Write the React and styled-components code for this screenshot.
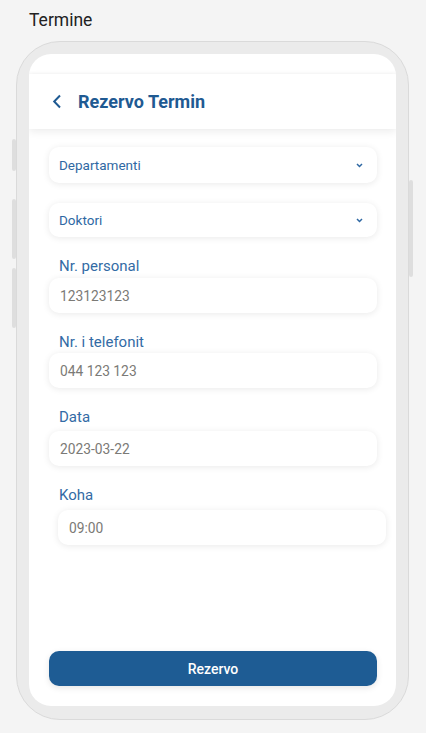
import styled, { createGlobalStyle } from 'styled-components';

const GlobalStyle = createGlobalStyle`
  html, body {
    margin: 0;
    padding: 0;
    background: #f4f4f4;
    font-family: 'Roboto', 'Liberation Sans', sans-serif;
  }
`;

const fields = [
  { label: 'Nr. personal', value: '123123123', gap: 3 },
  { label: 'Nr. i telefonit', value: '044 123 123', gap: 2 },
  { label: 'Data', value: '2023-03-22', gap: 5 },
  { label: 'Koha', value: '09:00', gap: 6, shift: 9 },
];

const Chevron = () => (
  <svg width="7" height="5" viewBox="0 0 7 5">
    <path d="M1 1l2.5 2.5L6 1" fill="none" stroke="#2f68a3" strokeWidth="1.5" />
  </svg>
);

const BackIcon = () => (
  <svg width="10" height="15" viewBox="0 0 10 15">
    <path d="M8 1.5L2.2 7.5 8 13.5" fill="none" stroke="#1f5a92" strokeWidth="2" />
  </svg>
);

const App = () => {
  return (
    <Page>
      <GlobalStyle />
      <PageTitle>Termine</PageTitle>
      <Phone>
        <SideButton $side="left" $top={97} $h={32} />
        <SideButton $side="left" $top={157} $h={60} />
        <SideButton $side="left" $top={226} $h={60} />
        <SideButton $side="right" $top={138} $h={97} />
        <Screen>
          <StatusBar />
          <Header>
            <BackIcon />
            <HeaderTitle>Rezervo Termin</HeaderTitle>
          </Header>
          <Form>
            <Select $h={36}>
              <span>Departamenti</span>
              <Chevron />
            </Select>
            <Select $h={34}>
              <span>Doktori</span>
              <Chevron />
            </Select>
            {fields.map((f) => (
              <Field key={f.label}>
                <Label $gap={f.gap}>{f.label}</Label>
                <Input $shift={f.shift || 0}>{f.value}</Input>
              </Field>
            ))}
          </Form>
          <Footer>
            <Button>Rezervo</Button>
          </Footer>
        </Screen>
      </Phone>
    </Page>
  );
};

const Page = styled.div`
  height: 733px;
  box-sizing: border-box;
  padding: 10px 0 0 16px;
`;

const PageTitle = styled.div`
  margin-left: 13px;
  font-size: 17.5px;
  line-height: 20px;
  color: #222;
`;

const Phone = styled.div`
  position: relative;
  margin-top: 11px;
  width: 393px;
  height: 679px;
  box-sizing: border-box;
  padding: 12px 12px 13px 12px;
  background: #ebebeb;
  border: 1.5px solid #dadada;
  border-radius: 44px;
  display: flex;
`;

const SideButton = styled.div`
  position: absolute;
  top: ${(p) => p.$top}px;
  ${(p) => (p.$side === 'left' ? 'left: -5px;' : 'right: -5px;')}
  width: 4px;
  height: ${(p) => p.$h}px;
  background: #dedede;
  border-radius: 2px;
`;

const Screen = styled.div`
  flex: 1;
  background: #fff;
  border-radius: 22px;
  overflow: hidden;
  display: flex;
  flex-direction: column;
`;

const StatusBar = styled.div`
  height: 20px;
  flex-shrink: 0;
`;

const Header = styled.div`
  height: 55px;
  flex-shrink: 0;
  display: flex;
  align-items: center;
  gap: 16px;
  padding-left: 23px;
  box-shadow: 0 3px 8px rgba(0, 0, 0, 0.07), 0 -1px 3px rgba(0, 0, 0, 0.04);
  position: relative;
  z-index: 1;
`;

const HeaderTitle = styled.div`
  font-size: 18px;
  font-weight: 700;
  color: #1f5a92;
`;

const Form = styled.div`
  display: flex;
  flex-direction: column;
  padding: 18px 19px 0 20px;
`;

const Select = styled.div`
  height: ${(p) => p.$h}px;
  margin-bottom: 20px;
  display: flex;
  align-items: center;
  justify-content: space-between;
  padding: 0 14px 0 10px;
  background: #fff;
  border-radius: 10px;
  box-shadow: 0 1px 7px rgba(0, 0, 0, 0.09);
  font-size: 13.5px;
  color: #2f68a3;
  svg {
    margin-top: 1px;
  }
`;

const Field = styled.div`
  display: flex;
  flex-direction: column;
  margin-bottom: 20px;
`;

const Label = styled.div`
  padding-left: 10px;
  font-size: 15px;
  line-height: 18px;
  color: #336ba5;
  margin-bottom: ${(p) => p.$gap}px;
`;

const Input = styled.div`
  height: 35px;
  display: flex;
  align-items: center;
  padding-left: 11px;
  margin-left: ${(p) => p.$shift}px;
  margin-right: ${(p) => -p.$shift}px;
  background: #fff;
  border-radius: 10px;
  box-shadow: 0 1px 7px rgba(0, 0, 0, 0.09);
  font-size: 13.8px;
  color: #7b7a76;
`;

const Footer = styled.div`
  margin-top: auto;
  padding: 0 19px 20px 20px;
`;

const Button = styled.div`
  height: 35px;
  display: flex;
  align-items: center;
  justify-content: center;
  background: #1e5c94;
  border-radius: 10px;
  box-shadow: 0 2px 6px rgba(0, 0, 0, 0.1);
  color: #fff;
  font-size: 14px;
  font-weight: 500;
`;

export default App;
